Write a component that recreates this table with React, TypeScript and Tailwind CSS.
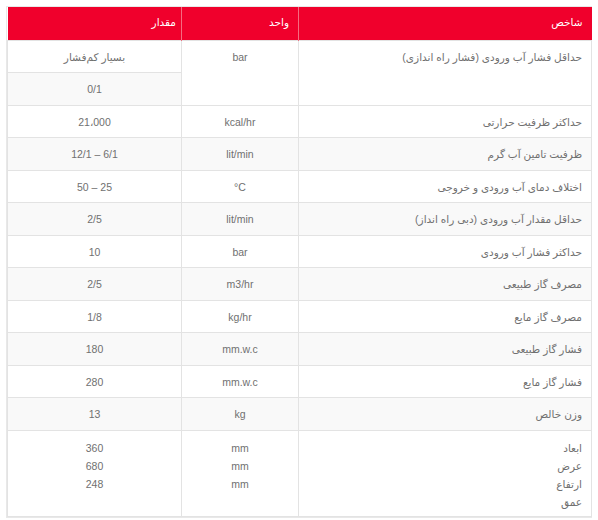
type Row = { label: string[]; unit: string[]; value: string[] };

const rows: Row[] = [
  { label: ["حداکثر ظرفیت حرارتی"], unit: ["kcal/hr"], value: ["21،000"] },
  { label: ["ظرفیت تامین آب گرم"], unit: ["lit/min"], value: ["12/1 – 6/1"] },
  { label: ["اختلاف دمای آب ورودی و خروجی"], unit: ["°C"], value: ["50 – 25"] },
  { label: ["حداقل مقدار آب ورودی (دبی راه انداز)"], unit: ["lit/min"], value: ["2/5"] },
  { label: ["حداکثر فشار آب ورودی"], unit: ["bar"], value: ["10"] },
  { label: ["مصرف گاز طبیعی"], unit: ["m3/hr"], value: ["2/5"] },
  { label: ["مصرف گاز مایع"], unit: ["kg/hr"], value: ["1/8"] },
  { label: ["فشار گاز طبیعی"], unit: ["mm.w.c"], value: ["180"] },
  { label: ["فشار گاز مایع"], unit: ["mm.w.c"], value: ["280"] },
  { label: ["وزن خالص"], unit: ["kg"], value: ["13"] },
  {
    label: ["ابعاد", "عرض", "ارتفاع", "عمق"],
    unit: ["mm", "mm", "mm"],
    value: ["360", "680", "248"],
  },
];

const cell = "border border-[#e3e3e3] px-[9px] pt-2 align-top leading-[17px]";

export default function App() {
  return (
    <div
      className="min-h-[520px] bg-white p-[6px]"
      style={{ fontFamily: "'Liberation Sans', 'DejaVu Sans', sans-serif" }}
    >
      <div className="border border-[#e8e8e8] w-[586px]">
        <table dir="rtl" className="w-[584px] border-collapse table-fixed text-[10.5px] text-[#707070]">
          <colgroup>
            <col className="w-[293px]" />
            <col className="w-[117px]" />
            <col className="w-[174px]" />
          </colgroup>
          <thead>
            <tr className="bg-[#f0002c] text-white">
              <th className="h-[33px] px-[9px] text-right font-normal border-l border-[#f56b80]">شاخص</th>
              <th className="h-[33px] px-[9px] text-right font-normal border-l border-[#f56b80]">واحد</th>
              <th className="h-[33px] px-[5px] text-right font-normal">مقدار</th>
            </tr>
          </thead>
          <tbody>
            <tr className="bg-white">
              <td rowSpan={2} className={`${cell} pb-[6.5px] text-right`}>
                حداقل فشار آب ورودی (فشار راه اندازی)
              </td>
              <td rowSpan={2} className={`${cell} pb-[6.5px] text-center`}>
                bar
              </td>
              <td className={`${cell} pb-[6px] text-center`}>بسیار کم‌فشار</td>
            </tr>
            <tr className="bg-[#f9f9f9]">
              <td className={`${cell} pb-[7px] text-center`}>0/1</td>
            </tr>
            {rows.map((r, i) => {
              const multi = r.label.length > 1;
              const lh = multi ? "leading-[18px] pb-[5px]" : "pb-[6.5px]";
              return (
                <tr key={i} className={i % 2 === 1 ? "bg-[#f9f9f9]" : "bg-white"}>
                  <td className={`${cell} ${lh} text-right`}>
                    {r.label.map((t, j) => (
                      <div key={j}>{t}</div>
                    ))}
                  </td>
                  <td className={`${cell} ${lh} text-center`}>
                    {r.unit.map((t, j) => (
                      <div key={j} dir="ltr">{t}</div>
                    ))}
                  </td>
                  <td className={`${cell} ${lh} text-center`}>
                    {r.value.map((t, j) => (
                      <div key={j} dir="ltr">{t}</div>
                    ))}
                  </td>
                </tr>
              );
            })}
          </tbody>
        </table>
      </div>
    </div>
  );
}
